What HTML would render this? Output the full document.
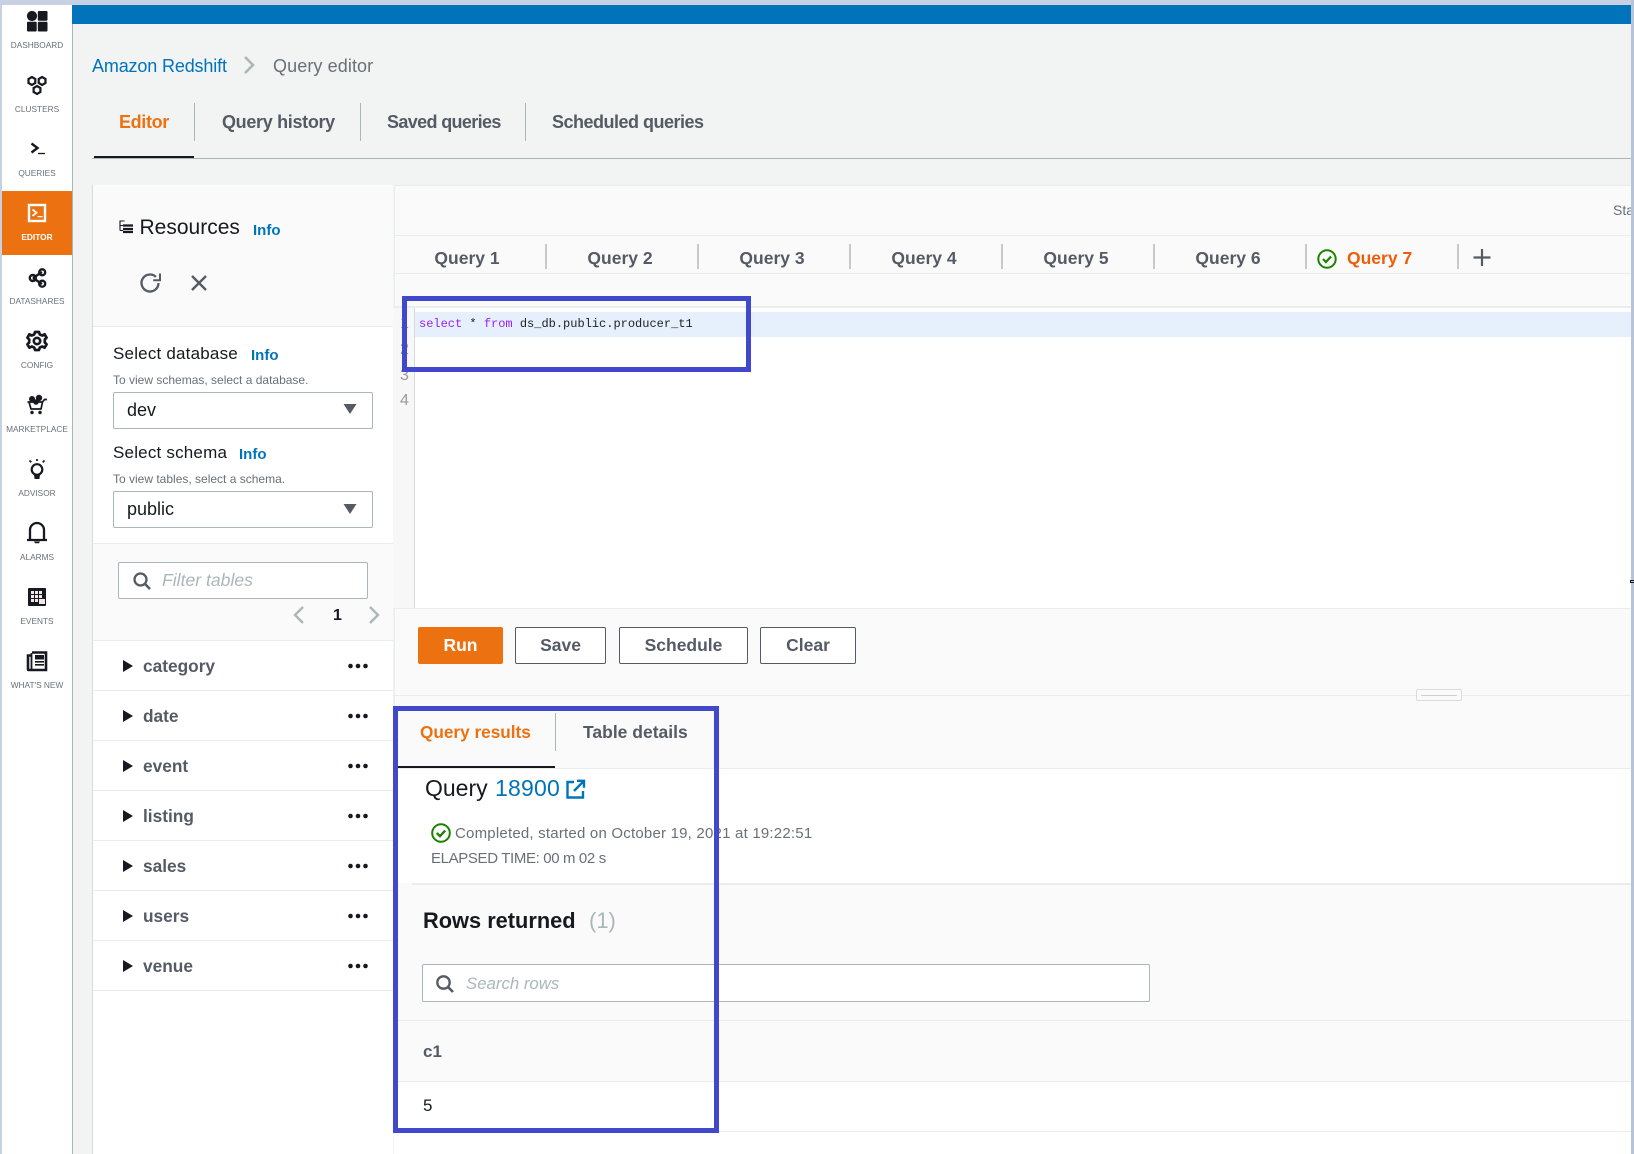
<!DOCTYPE html>
<html lang="en">
<head>
<meta charset="utf-8">
<title>Amazon Redshift Query editor</title>
<style>
html,body{margin:0;padding:0;width:1634px;height:1154px;overflow:hidden;background:#f2f3f3;font-family:"Liberation Sans",Arial,sans-serif;color:#16191f}
.a{position:absolute;box-sizing:border-box}
.t{position:absolute;white-space:nowrap;height:24px;line-height:24px}
.c{transform:translateX(-50%)}
.nav{font-size:8.3px;color:#687078;left:37px;transform:translateX(-50%)}
.b{font-weight:bold}
.gr{color:#545b64}
.info{color:#0073bb;font-weight:bold;font-size:15px}
.hl{position:absolute;background:#eaeded}
.sep{position:absolute;background:#aab7b8;width:1px}
.qs{position:absolute;background:#c8c8c8;width:2px;top:244px;height:25px}
.btn{position:absolute;top:627px;height:37px;border:1px solid #545b64;border-radius:2px;background:#fff;color:#545b64;font-weight:bold;font-size:17.5px;line-height:35px;text-align:center;box-sizing:border-box}
.inp{position:absolute;box-sizing:border-box;background:#fff;border:1px solid #aab7b8;border-radius:2px}
.tbl{font-size:17.3px;font-weight:bold;color:#545b64;left:143px}
svg{position:absolute;overflow:visible}
</style>
</head>
<body>
<!-- frame -->
<div class="a" style="left:0;top:0;width:1634px;height:5px;background:#c7d1e3"></div>
<div class="a" style="left:0;top:0;width:2px;height:1154px;background:#c7d1e3"></div>
<div class="a" style="left:2px;top:5px;width:70px;height:1149px;background:#fff"></div>
<div class="a" style="left:72px;top:5px;width:1px;height:1149px;background:#aab7b8"></div>
<div class="a" style="left:72px;top:5px;width:1559px;height:19px;background:#0073bb"></div>
<div class="a" style="left:1631px;top:0;width:3px;height:1154px;background:#b9c3d8"></div>

<!-- sidebar -->
<div class="a" style="left:2px;top:191px;width:70px;height:64px;background:#ec7211"></div>
<svg style="left:0;top:0" width="73" height="700" viewBox="0 0 73 700">
  <!-- dashboard -->
  <g fill="#16191f"><circle cx="32" cy="16" r="5.1"/><rect x="37.8" y="11" width="9.7" height="9.7" rx="1"/><rect x="27" y="21.8" width="9.7" height="9.7" rx="1"/><rect x="37.8" y="21.8" width="9.7" height="9.7" rx="1"/></g>
  <!-- clusters -->
  <g fill="none" stroke="#16191f" stroke-width="2.2">
    <path d="M31.9 77l3.4 2v4l-3.400 2-3.400-2v-4z"/>
    <path d="M42.1 77l3.400 2v4l-3.400 2-3.400-2v-4z"/>
    <path d="M37 86l3.400 2v4l-3.400 2-3.400-2v-4z"/>
  </g>
  <!-- queries -->
  <path d="M31.5 143.5l6 4.500-6 4.500" fill="none" stroke="#16191f" stroke-width="2.400"/>
  <path d="M38 153.500h7" stroke="#16191f" stroke-width="1.300"/>
  <!-- editor -->
  <rect x="29" y="205" width="16" height="16" fill="none" stroke="#fff" stroke-width="2.400"/>
  <path d="M32.500 209.500l4 3.200-4 3.200" fill="none" stroke="#fff" stroke-width="1.800"/>
  <path d="M37.500 216.700h5" stroke="#fff" stroke-width="1.200"/>
  <!-- datashares -->
  <g fill="none" stroke="#16191f" stroke-width="2.400">
    <path d="M33 278l9-6M33 278l9 6"/>
    <circle cx="32.800" cy="278" r="3"/><circle cx="42.200" cy="272.300" r="3"/><circle cx="42.200" cy="283.700" r="3"/>
  </g>
  <!-- config -->
  <g fill="none" stroke="#16191f">
    <circle cx="37" cy="341" r="3.200" stroke-width="2.600"/>
    <path stroke-width="2.700" d="M35 332h4l.8 2.500 2.400 1 2.400-1.200 2 3.400-1.800 1.800v3l1.800 1.800-2 3.400-2.400-1.200-2.400 1-.8 2.500h-4l-.8-2.500-2.400-1-2.400 1.200-2-3.400 1.800-1.800v-3l-1.800-1.800 2-3.400 2.400 1.200 2.400-1z" stroke-linejoin="round"/>
  </g>
  <!-- marketplace -->
  <g fill="#16191f">
    <circle cx="32" cy="399" r="3"/><circle cx="39" cy="398" r="3.200"/><circle cx="36" cy="402" r="2.800"/>
    <circle cx="32" cy="412.500" r="1.700"/><circle cx="40" cy="412.500" r="1.700"/>
  </g>
  <path d="M27.500 402h15l2-2.500h2.500M29 402l2 7h10l1.500-7" fill="none" stroke="#16191f" stroke-width="1.700"/>
  <!-- advisor -->
  <circle cx="37" cy="469.500" r="5.300" fill="none" stroke="#16191f" stroke-width="2.200"/>
  <path d="M29.500 460.500l1.800 1.800M44.500 460.500l-1.800 1.800M37 459v2" fill="none" stroke="#16191f" stroke-width="1.700"/>
  <path d="M34 474.500h6l-.6 4.500h-4.800z" fill="#16191f"/>
  <!-- alarms -->
  <path d="M27 540h20M30 539.500v-9.500a7 7 0 0 1 14 0v9.500" fill="none" stroke="#16191f" stroke-width="2.300"/>
  <path d="M34 541.500h6l-1 1.800h-4z" fill="#16191f"/>
  <!-- events -->
  <rect x="28" y="588" width="18" height="18" rx="1" fill="#16191f"/>
  <g fill="#f3e6e6"><rect x="31" y="591" width="3" height="3"/><rect x="35" y="591" width="3" height="3"/><rect x="39" y="591" width="3" height="3"/><rect x="31" y="595" width="3" height="3"/><rect x="35" y="595" width="3" height="3"/><rect x="39" y="595" width="3" height="3"/><rect x="31" y="599" width="3" height="3"/><rect x="35" y="599" width="3" height="3"/><rect x="39" y="599" width="6" height="5"/></g>
  <!-- what's new -->
  <path d="M32 652.500h14v17.500h-17.500c-.5 0-.5-.5-.5-1v-13.500h3" fill="none" stroke="#16191f" stroke-width="2.600"/>
  <path d="M31.500 653v16" stroke="#16191f" stroke-width="1.800"/>
  <rect x="35" y="655" width="9" height="4.500" fill="#16191f"/>
  <path d="M35 661.800h9M35 664.800h9" stroke="#16191f" stroke-width="1.600"/>
</svg>
<div class="t nav" style="top:33px">DASHBOARD</div>
<div class="t nav" style="top:97px">CLUSTERS</div>
<div class="t nav" style="top:161px">QUERIES</div>
<div class="t nav b" style="top:225px;color:#fff">EDITOR</div>
<div class="t nav" style="top:289px">DATASHARES</div>
<div class="t nav" style="top:353px">CONFIG</div>
<div class="t nav" style="top:417px">MARKETPLACE</div>
<div class="t nav" style="top:481px">ADVISOR</div>
<div class="t nav" style="top:545px">ALARMS</div>
<div class="t nav" style="top:609px">EVENTS</div>
<div class="t nav" style="top:673px">WHAT'S NEW</div>

<!-- breadcrumb -->
<div class="t" style="left:92px;top:54px;font-size:18px;color:#0073bb;letter-spacing:-.15px">Amazon Redshift</div>
<svg style="left:243px;top:55px" width="14" height="20"><path d="M2 2l8 8-8 8" fill="none" stroke="#aab7b8" stroke-width="2.600"/></svg>
<div class="t" style="left:273px;top:54px;font-size:18px;color:#687078;letter-spacing:.1px">Query editor</div>

<!-- top tabs -->
<div class="t b" style="left:119px;top:110px;font-size:18px;color:#ec7211;letter-spacing:-.35px">Editor</div>
<div class="sep" style="left:194px;top:103px;height:38px"></div>
<div class="t b gr" style="left:222px;top:110px;font-size:18px;letter-spacing:-.32px">Query history</div>
<div class="sep" style="left:360px;top:103px;height:38px"></div>
<div class="t b gr" style="left:387px;top:110px;font-size:18px;letter-spacing:-.64px">Saved queries</div>
<div class="sep" style="left:525px;top:103px;height:38px"></div>
<div class="t b gr" style="left:552px;top:110px;font-size:18px;letter-spacing:-.5px">Scheduled queries</div>
<div class="a" style="left:92px;top:158px;width:1539px;height:1px;background:#aab7b8"></div>
<div class="a" style="left:94px;top:156px;width:100px;height:2px;background:#16191f"></div>

<!-- left panel -->
<div class="a" style="left:92px;top:185px;width:301px;height:969px;background:#fff;border-left:1px solid #d5dbdb"></div>
<div class="a" style="left:93px;top:185px;width:300px;height:141px;background:#fafafa"></div>
<div class="hl" style="left:93px;top:326px;width:300px;height:1px"></div>
<svg style="left:119px;top:220px" width="15" height="14"><path d="M1 .5v10M.5 1h5M1 5.500h3M1 10.500h3" stroke="#16191f" stroke-width="1.100" fill="none"/><path d="M4 5.500h10M4 9h10M4 12h10" stroke="#16191f" stroke-width="2.300"/></svg>
<div class="t" style="left:139.500px;top:216px;font-size:21px">Resources</div>
<div class="t info" style="left:253px;top:219px">Info</div>
<svg style="left:140px;top:272px" width="22" height="22"><path d="M18.500 11a8.500 8.500 0 1 1-2.600-6.100" fill="none" stroke="#545b64" stroke-width="2.300"/><path d="M20 1.500v6.800h-6.800" fill="none" stroke="#545b64" stroke-width="2"/></svg>
<svg style="left:190px;top:274px" width="18" height="18"><path d="M2 2l14 14M16 2L2 16" stroke="#545b64" stroke-width="2.400"/></svg>

<div class="t" style="left:113px;top:342px;font-size:17px;letter-spacing:.2px">Select database</div>
<div class="t info" style="left:251px;top:343.500px">Info</div>
<div class="t" style="left:113px;top:368px;font-size:12px;color:#687078">To view schemas, select a database.</div>
<div class="inp" style="left:113px;top:392px;width:260px;height:37px"></div>
<div class="t" style="left:127px;top:398px;font-size:18px">dev</div>
<svg style="left:343px;top:403px" width="14" height="12"><path d="M0.500 1h13L7 11z" fill="#545b64"/></svg>

<div class="t" style="left:113px;top:441px;font-size:17px;letter-spacing:.2px">Select schema</div>
<div class="t info" style="left:239px;top:442.500px">Info</div>
<div class="t" style="left:113px;top:467px;font-size:12px;color:#687078">To view tables, select a schema.</div>
<div class="inp" style="left:113px;top:491px;width:260px;height:37px"></div>
<div class="t" style="left:127px;top:497px;font-size:18px">public</div>
<svg style="left:343px;top:503px" width="14" height="12"><path d="M0.500 1h13L7 11z" fill="#545b64"/></svg>

<div class="a" style="left:93px;top:543px;width:300px;height:97px;background:#fafafa;border-top:1px solid #eaeded"></div>
<div class="inp" style="left:118px;top:562px;width:250px;height:37px"></div>
<svg style="left:132px;top:571px" width="20" height="20"><circle cx="8.500" cy="8.500" r="6" fill="none" stroke="#545b64" stroke-width="2.300"/><path d="M13 13l5 5" stroke="#545b64" stroke-width="2.600"/></svg>
<div class="t" style="left:162px;top:568px;font-size:17.600px;font-style:italic;color:#aab7b8">Filter tables</div>
<svg style="left:293px;top:605px" width="12" height="20"><path d="M10 2L2 10l8 8" fill="none" stroke="#aab7b8" stroke-width="2.400"/></svg>
<div class="t b" style="left:333px;top:604px;font-size:16px">1</div>
<svg style="left:368px;top:605px" width="12" height="20"><path d="M2 2l8 8-8 8" fill="none" stroke="#aab7b8" stroke-width="2.400"/></svg>

<div class="hl" style="left:93px;top:640px;width:300px;height:1px"></div>
<div class="hl" style="left:93px;top:690px;width:300px;height:1px"></div>
<div class="hl" style="left:93px;top:740px;width:300px;height:1px"></div>
<div class="hl" style="left:93px;top:790px;width:300px;height:1px"></div>
<div class="hl" style="left:93px;top:840px;width:300px;height:1px"></div>
<div class="hl" style="left:93px;top:890px;width:300px;height:1px"></div>
<div class="hl" style="left:93px;top:940px;width:300px;height:1px"></div>
<div class="hl" style="left:93px;top:990px;width:300px;height:1px"></div>
<svg style="left:0;top:0" width="393" height="1000">
  <g fill="#16191f">
    <path d="M123 660v12l10-6z"/><path d="M123 710v12l10-6z"/><path d="M123 760v12l10-6z"/><path d="M123 810v12l10-6z"/><path d="M123 860v12l10-6z"/><path d="M123 910v12l10-6z"/><path d="M123 960v12l10-6z"/>
    <circle cx="350.500" cy="666" r="2.300"/><circle cx="358" cy="666" r="2.300"/><circle cx="365.500" cy="666" r="2.300"/>
    <circle cx="350.500" cy="716" r="2.300"/><circle cx="358" cy="716" r="2.300"/><circle cx="365.500" cy="716" r="2.300"/>
    <circle cx="350.500" cy="766" r="2.300"/><circle cx="358" cy="766" r="2.300"/><circle cx="365.500" cy="766" r="2.300"/>
    <circle cx="350.500" cy="816" r="2.300"/><circle cx="358" cy="816" r="2.300"/><circle cx="365.500" cy="816" r="2.300"/>
    <circle cx="350.500" cy="866" r="2.300"/><circle cx="358" cy="866" r="2.300"/><circle cx="365.500" cy="866" r="2.300"/>
    <circle cx="350.500" cy="916" r="2.300"/><circle cx="358" cy="916" r="2.300"/><circle cx="365.500" cy="916" r="2.300"/>
    <circle cx="350.500" cy="966" r="2.300"/><circle cx="358" cy="966" r="2.300"/><circle cx="365.500" cy="966" r="2.300"/>
  </g>
</svg>
<div class="t tbl" style="top:654px">category</div>
<div class="t tbl" style="top:704px">date</div>
<div class="t tbl" style="top:754px">event</div>
<div class="t tbl" style="top:804px">listing</div>
<div class="t tbl" style="top:854px">sales</div>
<div class="t tbl" style="top:904px">users</div>
<div class="t tbl" style="top:954px">venue</div>

<!-- right panel -->
<div class="a" style="left:394px;top:185px;width:1237px;height:969px;background:#fafafa;border-left:1px solid #eaeded;border-top:1px solid #eaeded"></div>
<div class="hl" style="left:395px;top:235px;width:1236px;height:1px"></div>
<div class="hl" style="left:393px;top:273px;width:1238px;height:1px"></div>
<div class="t" style="left:1613px;top:198px;font-size:14px;color:#687078;width:18px;overflow:hidden">Status</div>

<div class="qs" style="left:545px"></div><div class="qs" style="left:697px"></div><div class="qs" style="left:849px"></div><div class="qs" style="left:1001px"></div><div class="qs" style="left:1153px"></div><div class="qs" style="left:1305px"></div><div class="qs" style="left:1457px"></div>
<div class="t b gr c" style="left:467px;top:246px;font-size:17.500px">Query 1</div>
<div class="t b gr c" style="left:620px;top:246px;font-size:17.500px">Query 2</div>
<div class="t b gr c" style="left:772px;top:246px;font-size:17.500px">Query 3</div>
<div class="t b gr c" style="left:924px;top:246px;font-size:17.500px">Query 4</div>
<div class="t b gr c" style="left:1076px;top:246px;font-size:17.500px">Query 5</div>
<div class="t b gr c" style="left:1228px;top:246px;font-size:17.500px">Query 6</div>
<div class="t b" style="left:1347px;top:246px;font-size:17.500px;color:#ec5e0a">Query 7</div>
<svg style="left:1317px;top:249px" width="20" height="20"><circle cx="10" cy="10" r="8.700" fill="none" stroke="#1d8102" stroke-width="2"/><path d="M6 10l3 3 5-5.500" fill="none" stroke="#1d8102" stroke-width="2.200"/></svg>
<svg style="left:1472px;top:247.500px" width="20" height="20"><path d="M10 1v17M1.500 9.500h17" stroke="#545b64" stroke-width="2.200"/></svg>

<!-- editor -->
<div class="a" style="left:393px;top:306px;width:1238px;height:2px;background:#eaeded"></div>
<div class="a" style="left:394px;top:308px;width:1237px;height:300px;background:#fff"></div>
<div class="a" style="left:393px;top:308px;width:21px;height:300px;background:#f7f7f7"></div>
<div class="a" style="left:414px;top:308px;width:1px;height:300px;background:#d5dbdb"></div>
<div class="a" style="left:415px;top:312px;width:1216px;height:25px;background:#e6f0fc"></div>
<div class="t" style="left:400px;top:312px;font-size:16px;color:#999">1</div>
<div class="t" style="left:400px;top:338px;font-size:16px;color:#999">2</div>
<div class="t" style="left:400px;top:364px;font-size:16px;color:#999">3</div>
<div class="t" style="left:400px;top:389px;font-size:16px;color:#999">4</div>
<div class="t" style="left:419px;top:312px;font-family:'Liberation Mono',monospace;font-size:12px;color:#222"><span style="color:#9a1ff0">select</span> * <span style="color:#9a1ff0">from</span> ds_db.public.producer_t1</div>
<div class="a" style="left:402px;top:296px;width:349px;height:76px;border:5px solid #4148cc"></div>
<div class="a" style="left:1630px;top:580px;width:4px;height:3px;border:1px solid #16191f;border-right:0"></div>

<div class="hl" style="left:393px;top:608px;width:1238px;height:1px"></div>
<div class="btn" style="left:418px;width:85px;background:#ec7211;border-color:#ec7211;color:#fff">Run</div>
<div class="btn" style="left:515px;width:91px">Save</div>
<div class="btn" style="left:619px;width:129px">Schedule</div>
<div class="btn" style="left:760px;width:96px">Clear</div>
<div class="hl" style="left:393px;top:695px;width:1238px;height:1px"></div>
<div class="a" style="left:1416px;top:689px;width:46px;height:12px;background:#fafafa;border:1px solid #dcdcdc;border-radius:2px"></div>
<div class="a" style="left:1421px;top:695px;width:36px;height:1px;background:#cfcfcf"></div>

<!-- results -->
<div class="t b" style="left:420px;top:720px;font-size:17.200px;color:#ec7211">Query results</div>
<div class="sep" style="left:555px;top:713px;height:38px"></div>
<div class="t b gr" style="left:583px;top:720px;font-size:17.500px">Table details</div>
<div class="a" style="left:394px;top:768px;width:1237px;height:115px;background:#fff;border-top:1px solid #eaeded"></div>
<div class="a" style="left:398px;top:766px;width:157px;height:2px;background:#16191f"></div>
<div class="t" style="left:425px;top:776px;font-size:23px">Query <span style="color:#0073bb;margin-left:1px;letter-spacing:.2px">18900</span></div>
<svg style="left:565px;top:779px" width="21" height="21"><path d="M9 3H2.500v15.500H18V12" fill="none" stroke="#0073bb" stroke-width="2.400"/><path d="M12 1.800h7v7M18.500 2.300L9 12" fill="none" stroke="#0073bb" stroke-width="2.400"/></svg>
<svg style="left:431px;top:823px" width="20" height="20"><circle cx="10" cy="10" r="8.800" fill="none" stroke="#1d8102" stroke-width="2"/><path d="M5.800 10l3.200 3.200 5.200-5.700" fill="none" stroke="#1d8102" stroke-width="2.400"/></svg>
<div class="t" style="left:455px;top:822px;font-size:15px;color:#687078;letter-spacing:.21px">Completed, started on October 19, 2021 at 19:22:51</div>
<div class="t" style="left:431px;top:847px;font-size:15px;color:#687078;letter-spacing:-.36px">ELAPSED TIME: 00 m 02 s</div>
<div class="a" style="left:412px;top:883px;width:1219px;height:2px;background:#eaeded"></div>
<div class="t b" style="left:423px;top:909px;font-size:21.800px">Rows returned</div>
<div class="t" style="left:589px;top:909px;font-size:22px;color:#aab7b8">(1)</div>
<div class="inp" style="left:422px;top:964px;width:728px;height:38px"></div>
<svg style="left:435px;top:974px" width="20" height="20"><circle cx="8.500" cy="8.500" r="6.200" fill="none" stroke="#545b64" stroke-width="2.300"/><path d="M13 13l5 5" stroke="#545b64" stroke-width="2.600"/></svg>
<div class="t" style="left:466px;top:972px;font-size:16.800px;font-style:italic;color:#aab7b8">Search rows</div>
<div class="hl" style="left:395px;top:1020px;width:1236px;height:1px"></div>
<div class="t b gr" style="left:423px;top:1040px;font-size:17px">c1</div>
<div class="a" style="left:394px;top:1081px;width:1237px;height:73px;background:#fff;border-top:1px solid #eaeded"></div>
<div class="t" style="left:423px;top:1094px;font-size:17px">5</div>
<div class="hl" style="left:395px;top:1131px;width:1236px;height:1px"></div>
<div class="a" style="left:393px;top:706px;width:326px;height:427px;border:5px solid #4148cc"></div>
</body>
</html>
